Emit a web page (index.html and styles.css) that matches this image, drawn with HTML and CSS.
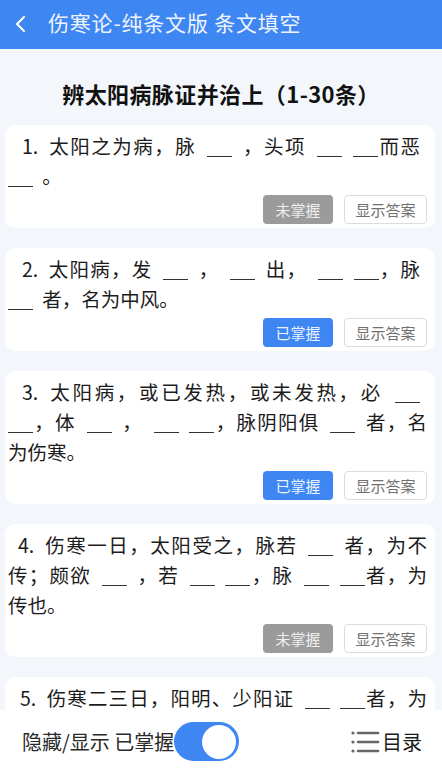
FILE: index.html
```html
<!DOCTYPE html>
<html lang="zh-CN">
<head>
<meta charset="utf-8">
<title>条文填空</title>
<link rel="stylesheet" href="styles.css">
</head>
<body>
<div class="app">
  <header class="topbar">
    <svg class="back" width="14" height="18" viewBox="0 0 14 18"><polyline points="11,2 4,9 11,16" fill="none" stroke="#fff" stroke-width="2" stroke-linecap="round" stroke-linejoin="round"/></svg>
    <span class="topbar-title">伤寒论-纯条文版 条文填空</span>
  </header>
  <main class="content">
    <h1 class="section-title">辨太阳病脉证并治上（1-30条）</h1>
    <div class="cards">
      <div class="card">
        <div class="text">
          <div class="line jl first">1. 太阳之为病，脉 <span class="blank"></span> ，头项 <span class="blank"></span> <span class="blank"></span>而恶</div>
          <div class="line"><span class="blank"></span> 。</div>
        </div>
        <div class="actions"><span class="btn btn-gray">未掌握</span><span class="btn btn-outline">显示答案</span></div>
      </div>
      <div class="card">
        <div class="text">
          <div class="line jl first">2. 太阳病，发 <span class="blank"></span> ， <span class="blank"></span> 出， <span class="blank"></span> <span class="blank"></span>，脉</div>
          <div class="line"><span class="blank"></span> 者，名为中风。</div>
        </div>
        <div class="actions"><span class="btn btn-blue">已掌握</span><span class="btn btn-outline">显示答案</span></div>
      </div>
      <div class="card">
        <div class="text">
          <div class="line jl first">3. 太阳病，或已发热，或未发热，必 <span class="blank"></span></div>
          <div class="line jl"><span class="blank"></span>，体 <span class="blank"></span> ， <span class="blank"></span> <span class="blank"></span>，脉阴阳俱 <span class="blank"></span> 者，名</div>
          <div class="line">为伤寒。</div>
        </div>
        <div class="actions"><span class="btn btn-blue">已掌握</span><span class="btn btn-outline">显示答案</span></div>
      </div>
      <div class="card">
        <div class="text">
          <div class="line jl first four">4. 伤寒一日，太阳受之，脉若 <span class="blank"></span> 者，为不</div>
          <div class="line jl">传；颇欲 <span class="blank"></span> ，若 <span class="blank"></span> <span class="blank"></span>，脉 <span class="blank"></span> <span class="blank"></span>者，为</div>
          <div class="line">传也。</div>
        </div>
        <div class="actions"><span class="btn btn-gray">未掌握</span><span class="btn btn-outline">显示答案</span></div>
      </div>
      <div class="card">
        <div class="text">
          <div class="line jl first five">5. 伤寒二三日，阳明、少阳证 <span class="blank"></span> <span class="blank"></span>者，为</div>
          <div class="line">不传也。</div>
        </div>
        <div class="actions"><span class="btn btn-gray">未掌握</span><span class="btn btn-outline">显示答案</span></div>
      </div>
    </div>
  </main>
  <footer class="bottombar">
    <div class="toggle-group">
      <span class="toggle-label">隐藏/显示 已掌握</span>
      <span class="switch"><span class="knob"></span></span>
    </div>
    <div class="catalog">
      <svg class="list-icon" width="30" height="26" viewBox="0 0 30 26">
        <g fill="#666">
          <circle cx="3" cy="4" r="1.6"/>
          <circle cx="3" cy="13" r="1.6"/>
          <circle cx="3" cy="22" r="1.6"/>
        </g>
        <g stroke="#666" stroke-width="2.6" stroke-linecap="round">
          <line x1="8" y1="4" x2="28" y2="4"/>
          <line x1="8" y1="13" x2="28" y2="13"/>
          <line x1="8" y1="22" x2="28" y2="22"/>
        </g>
      </svg>
      <span class="catalog-text">目录</span>
    </div>
  </footer>
</div>
</body>
</html>
```
FILE: styles.css
```css
* { box-sizing: border-box; }
html, body {
  margin: 0;
  padding: 0;
  height: 100%;
}
body {
  font-family: "Noto Sans CJK SC", "Noto Sans", sans-serif;
  background: #f3f6fa;
  color: #1c1c1c;
  overflow: hidden;
}
.app {
  display: flex;
  flex-direction: column;
  height: 100vh;
}
.topbar {
  flex: 0 0 49px;
  background: #3e86f1;
  display: flex;
  align-items: center;
  padding-left: 13px;
  gap: 21px;
}
.back { display: block; margin-top: -2px; }
.topbar-title {
  color: #eef4ff;
  font-size: 21px;
  letter-spacing: 0.8px;
  line-height: 1;
  margin-top: -4px;
}
.content {
  flex: 1 1 auto;
  overflow: hidden;
}
.section-title {
  margin: 0;
  padding-top: 28px;
  padding-bottom: 16px;
  text-align: center;
  font-size: 22px;
  font-weight: 700;
  line-height: 32px;
  color: #111;
  letter-spacing: 0.4px;
}
.cards {
  display: flex;
  flex-direction: column;
  gap: 20px;
  padding: 0 7px 0 5px;
}
.card {
  background: #fff;
  border-radius: 10px;
  padding: 6px 8px 4px 3px;
}
.text {
  font-size: 19.5px;
  line-height: 30px;
  margin-bottom: 4px;
  word-spacing: 5px;
}
.line {
  white-space: nowrap;
}
.line.jl {
  text-align: justify;
  text-align-last: justify;
  white-space: normal;
}
.line.first { padding-left: 14px; padding-right: 7px; }
.line.first.four { padding-left: 10px; padding-right: 0; }
.line.first.five { padding-left: 12px; padding-right: 0; }
.blank {
  display: inline-block;
  width: 25px;
  height: 1px;
  border-bottom: 1.6px solid #333;
  vertical-align: -3px;
}
.actions {
  display: flex;
  justify-content: flex-end;
  gap: 11px;
}
.btn {
  height: 29px;
  display: inline-flex;
  align-items: center;
  justify-content: center;
  font-size: 15px;
  border-radius: 4px;
  white-space: nowrap;
}
.btn-gray {
  background: #9b9b9b;
  color: #eeeeee;
  width: 70px;
}
.btn-blue {
  background: #3e86f1;
  color: #eaf2ff;
  width: 70px;
}
.btn-outline {
  background: #fff;
  border: 1px solid #dcdcdc;
  color: #707070;
  width: 83px;
}
.bottombar {
  flex: 0 0 63px;
  background: #fff;
  display: flex;
  align-items: center;
  justify-content: space-between;
  padding: 0 20px 0 22px;
}
.toggle-group {
  display: flex;
  align-items: center;
}
.toggle-label {
  font-size: 20px;
  color: #2a2a2a;
}
.switch {
  width: 65px;
  height: 39px;
  border-radius: 20px;
  background: #3e86f1;
  display: flex;
  align-items: center;
  justify-content: flex-end;
  padding-right: 3px;
}
.knob {
  width: 34px;
  height: 34px;
  border-radius: 50%;
  background: #fff;
}
.catalog {
  display: flex;
  align-items: center;
  gap: 2px;
}
.list-icon { display: block; }
.catalog-text {
  font-size: 20px;
  color: #1c1c1c;
}
```
